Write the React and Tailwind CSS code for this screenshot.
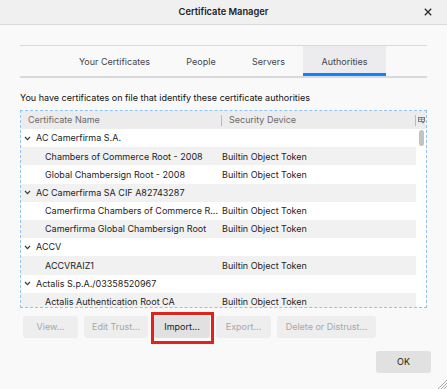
import React from 'react'

const tabs = [
	{ label: 'Your Certificates', w: 'w-[107px]' },
	{ label: 'People', w: 'w-[66px]' },
	{ label: 'Servers', w: 'w-[69px]' },
	{ label: 'Authorities', w: 'w-[83px]', active: true },
]

const rows = [
	{ name: 'AC Camerfirma S.A.', group: true },
	{ name: 'Chambers of Commerce Root - 2008', device: 'Builtin Object Token' },
	{ name: 'Global Chambersign Root - 2008', device: 'Builtin Object Token' },
	{ name: 'AC Camerfirma SA CIF A82743287', group: true },
	{ name: 'Camerfirma Chambers of Commerce R...', device: 'Builtin Object Token' },
	{ name: 'Camerfirma Global Chambersign Root', device: 'Builtin Object Token' },
	{ name: 'ACCV', group: true },
	{ name: 'ACCVRAIZ1', device: 'Builtin Object Token' },
	{ name: 'Actalis S.p.A./03358520967', group: true },
	{ name: 'Actalis Authentication Root CA', device: 'Builtin Object Token' },
]

const actions = [
	{ label: 'View...', w: 'w-[55px]' },
	{ label: 'Edit Trust...', w: 'w-[64px]' },
	{ label: 'Import...', w: 'w-[56px]', enabled: true, marked: true },
	{ label: 'Export...', w: 'w-[55px]' },
	{ label: 'Delete or Distrust...', w: 'w-[99px]' },
]

const Chevron = () => (
	<svg width="7" height="5" viewBox="0 0 7 5" className="shrink-0">
		<polyline points="1,1 3.5,3.6 6,1" fill="none" stroke="#3a3a3a" strokeWidth="1.2" />
	</svg>
)

const App = () => {
	return (
		<div className="w-[447px] h-[389px] bg-[#f9f9f9] flex flex-col overflow-hidden font-['Inter','Liberation_Sans',sans-serif] text-[9px] text-[#1d1d1f] relative">
			{/* title bar */}
			<div className="h-[25px] shrink-0 bg-[#f0f0f0] border-b border-[#dadada] grid grid-cols-[1fr_auto_1fr] items-center">
				<div />
				<div className="font-semibold text-[9.3px] text-[#222]">Certificate Manager</div>
				<div className="flex justify-end pr-[15px]">
					<svg width="8" height="8" viewBox="0 0 8 8">
						<path d="M0.8 0.8 L7.2 7.2 M7.2 0.8 L0.8 7.2" stroke="#2b2b2b" strokeWidth="1.3" />
					</svg>
				</div>
			</div>

			<div className="flex flex-col px-[20px] pt-[20px]">
				{/* tabs */}
				<div className="h-[33px] border-t border-b-2 border-[#d9d9dc] flex justify-center">
					{tabs.map((t) => (
						<div
							key={t.label}
							className={`${t.w} h-full flex items-center justify-center pt-[2px] text-[#45454a] ${t.active ? 'bg-[#ececee] shadow-[inset_0_-3px_0_#0a84ff]' : ''}`}>
							{t.label}
						</div>
					))}
				</div>

				<p className="mt-[14px] leading-[12px] text-[#111]">You have certificates on file that identify these certificate authorities</p>

				{/* tree */}
				<div className="mt-[6px] h-[198px] border border-dashed border-[#8ec3f3] flex flex-col overflow-hidden">
					<div className="h-[18px] shrink-0 bg-[#ececec] flex items-center text-[#6b6b6b]">
						<div className="w-[200px] pl-[7px]">Certificate Name</div>
						<div className="w-px h-[11px] bg-[#b9b9b9]" />
						<div className="flex-1 pl-[7px]">Security Device</div>
						<div className="w-px h-[11px] bg-[#b9b9b9]" />
						<div className="w-[10px] flex justify-center">
							<svg width="7" height="7" viewBox="0 0 7 7">
								<rect x="0.5" y="0.5" width="6" height="4" fill="none" stroke="#777" strokeWidth="0.9" />
								<path d="M0.5 2.3 H6.5 M3.5 0.5 V4.5" stroke="#777" strokeWidth="0.7" />
								<path d="M3.6 5 L5 6.6 L6.4 5 Z" fill="#777" />
							</svg>
						</div>
					</div>
					<div className="flex-1 flex min-h-0 bg-white">
						<div className="w-[396px] overflow-hidden">
							{rows.map((r, i) => (
								<div key={r.name} className={`h-[18.2px] flex items-center ${i % 2 === 1 ? 'bg-[#f1f1f1]' : 'bg-white'}`}>
									<div className={`w-[200px] flex items-center whitespace-nowrap overflow-hidden ${r.group ? 'pl-[3px] gap-[5px]' : 'pl-[24px]'}`}>
										{r.group ? <Chevron /> : null}
										<span>{r.name}</span>
									</div>
									<div className="flex-1 pl-[1px] whitespace-nowrap">{r.device}</div>
								</div>
							))}
						</div>
						<div className="w-[10px] bg-white flex justify-center pt-[1px]">
							<div className="w-[5px] h-[16px] rounded-full bg-[#c2c2c2]" />
						</div>
					</div>
				</div>

				{/* actions */}
				<div className="mt-[8px] ml-[3px] flex gap-[6px]">
					{actions.map((a) => (
						<div key={a.label} className="relative">
							<div
								className={`${a.w} h-[22px] rounded-[3px] flex items-center justify-center ${a.enabled ? 'bg-[#e1e1e1] text-[#1a1a1a]' : 'bg-[#eeeeee] text-[#a7a7a7]'}`}>
								{a.label}
							</div>
							{a.marked ? <div className="absolute -left-[3px] -top-[4px] -right-[4px] -bottom-[6px] border-[3px] border-[#e3231b]" /> : null}
						</div>
					))}
				</div>

				<div className="mt-[13px] -mr-[4px] flex justify-end">
					<div className="w-[55px] h-[22px] rounded-[3px] bg-[#e1e1e1] flex items-center justify-center text-[#1a1a1a]">OK</div>
				</div>
			</div>

			{/* resize grip */}
			<svg width="10" height="10" viewBox="0 0 10 10" className="absolute right-0 bottom-0">
				<path d="M10 1 L1 10 M10 4 L4 10 M10 7 L7 10" stroke="#9a9a9a" strokeWidth="0.8" />
			</svg>
		</div>
	)
}

export default App
